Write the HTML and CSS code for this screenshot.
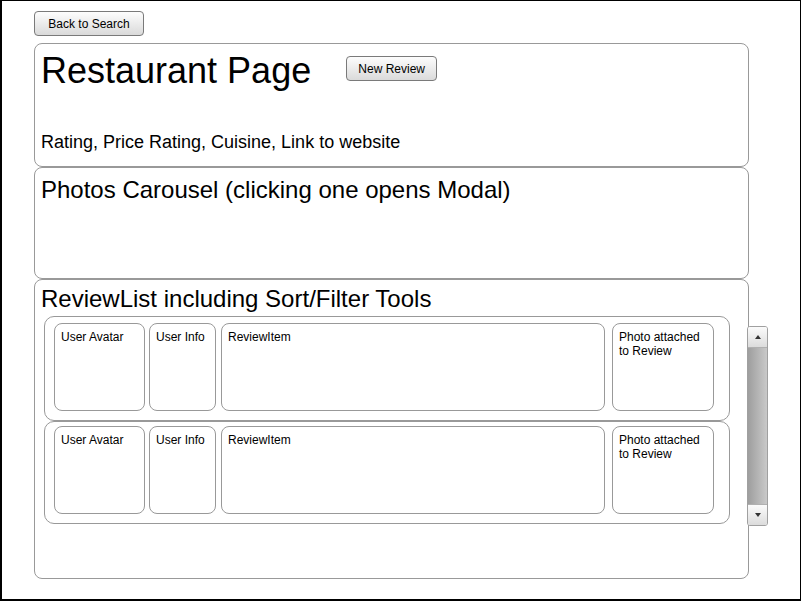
FILE: index.html
```html
<!DOCTYPE html>
<html lang="en">
<head>
    <meta charset="UTF-8">
    <title>Restaurant Page</title>
    <link rel="stylesheet" href="styles.css">
</head>
<body>
    <div class="frame">
        <button class="btn back-btn">Back to Search</button>

        <div class="panels">
            <div class="panel panel-info">
                <div class="title-row">
                    <h1>Restaurant Page</h1>
                    <button class="btn new-btn">New Review</button>
                </div>
                <p class="meta">Rating, Price Rating, Cuisine, Link to website</p>
            </div>

            <div class="panel panel-photos">
                <h2>Photos Carousel (clicking one opens Modal)</h2>
            </div>

            <div class="panel panel-reviews">
                <h2>ReviewList including Sort/Filter Tools</h2>
                <div class="review-area">
                    <div class="review-list">
                        <div class="review-row">
                            <div class="box avatar">User Avatar</div>
                            <div class="box info">User Info</div>
                            <div class="box item">ReviewItem</div>
                            <div class="box photo">Photo attached to Review</div>
                        </div>
                        <div class="review-row">
                            <div class="box avatar">User Avatar</div>
                            <div class="box info">User Info</div>
                            <div class="box item">ReviewItem</div>
                            <div class="box photo">Photo attached to Review</div>
                        </div>
                    </div>
                    <div class="scrollbar">
                        <div class="scroll-btn"><span class="arrow-up"></span></div>
                        <div class="scroll-track"></div>
                        <div class="scroll-btn"><span class="arrow-down"></span></div>
                    </div>
                </div>
            </div>
        </div>
    </div>
</body>
</html>
```

FILE: styles.css
```css
* {
    box-sizing: border-box;
}
body {
    margin: 0;
    font-family: 'Liberation Sans', Arial, sans-serif;
    color: #000;
    background-color: #fff;
}
.frame {
    width: 801px;
    height: 601px;
    border-top: 1px solid #000;
    border-left: 2px solid #000;
    border-right: 1px solid #000;
    border-bottom: 2px solid #000;
    padding: 10px 0 0 32px;
}
.btn {
    font-family: 'Liberation Sans', Arial, sans-serif;
    font-size: 12px;
    color: #000;
    background: linear-gradient(#fdfdfd, #dadada);
    border: 1px solid #7a7a7a;
    border-radius: 4px;
    padding: 0;
    display: block;
}
.back-btn {
    width: 110px;
    height: 25px;
}
.panels {
    margin-top: 7px;
    width: 715px;
}
.panel {
    border: 1px solid #999;
    border-radius: 8px;
}
.panel-info {
    height: 124px;
    padding: 6px 6px 0 6px;
}
.title-row {
    display: flex;
    align-items: flex-start;
}
h1 {
    margin: 0;
    font-size: 36px;
    line-height: 41px;
    font-weight: normal;
}
.new-btn {
    width: 91px;
    height: 25px;
    margin: 6px 0 0 35px;
}
.meta {
    margin: 41px 0 0 0;
    font-size: 18px;
    line-height: 21px;
}
h2 {
    margin: 0;
    font-size: 24px;
    line-height: 28px;
    font-weight: normal;
}
.panel-photos {
    height: 112px;
    padding: 8px 6px 0 6px;
}
.panel-reviews {
    height: 300px;
    padding: 5px 0 0 6px;
}
.review-area {
    display: flex;
    align-items: flex-start;
    margin: 3px 0 0 3px;
}
.review-list {
    width: 686px;
    flex-shrink: 0;
}
.review-row {
    display: flex;
    height: 105px;
    border: 1px solid #999;
    border-radius: 10px;
    padding: 6px 15px 9px 9px;
}
.review-row + .review-row {
    height: 103px;
    padding-top: 4px;
}
.box {
    height: 88px;
    border: 1px solid #999;
    border-radius: 8px;
    padding: 6px 6px;
    font-size: 12px;
    line-height: 14px;
}
.avatar {
    width: 91px;
}
.info {
    width: 67px;
    margin-left: 4px;
}
.item {
    width: 384px;
    margin-left: 5px;
}
.photo {
    width: 102px;
    margin-left: 7px;
}
.scrollbar {
    width: 21px;
    height: 200px;
    flex-shrink: 0;
    margin: 10px 0 0 17px;
    display: flex;
    flex-direction: column;
    border: 1px solid #a0a0a0;
    border-radius: 3px;
    overflow: hidden;
    background-color: #fff;
}
.scroll-btn {
    height: 20px;
    display: flex;
    align-items: center;
    justify-content: center;
    background: linear-gradient(#fbfbfb, #dcdcdc);
}
.scroll-track {
    flex-grow: 1;
    background: linear-gradient(to right, #9e9e9e, #c9c9c9);
    border-top: 1px solid #b0b0b0;
    border-bottom: 1px solid #b0b0b0;
}
.arrow-up {
    width: 0;
    height: 0;
    border-left: 3px solid transparent;
    border-right: 3px solid transparent;
    border-bottom: 4px solid #333;
}
.arrow-down {
    width: 0;
    height: 0;
    border-left: 3px solid transparent;
    border-right: 3px solid transparent;
    border-top: 4px solid #333;
}
```
